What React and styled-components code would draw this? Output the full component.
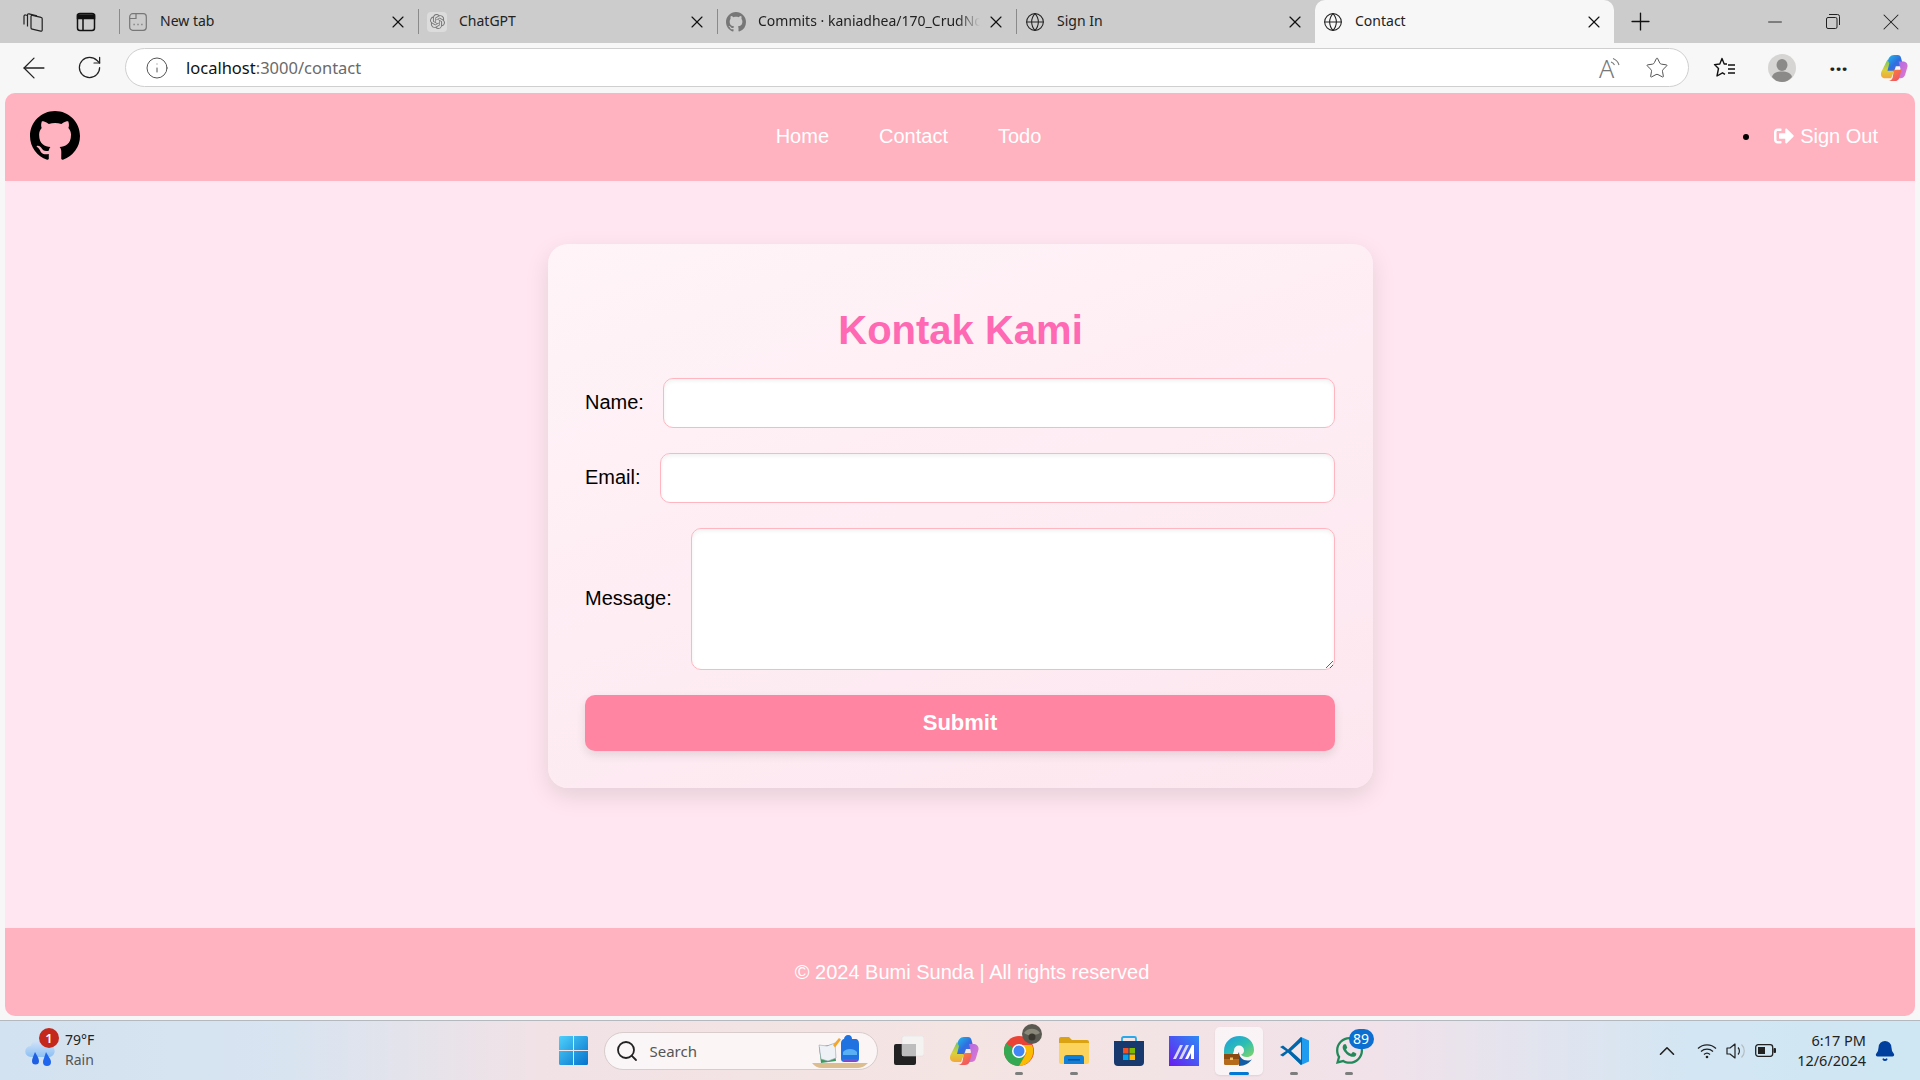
import styled, { createGlobalStyle } from "styled-components";
import { FaSignOutAlt, FaWhatsapp } from "react-icons/fa";
import { BsGithub } from "react-icons/bs";
import { SiOpenai } from "react-icons/si";
import { X, Plus, Minus, Globe, ArrowLeft, RotateCw, Info, Star, ChevronUp, Search, Bell } from "lucide-react";

const GlobalStyle = createGlobalStyle`
    html, body {
        margin: 0;
        padding: 0;
        width: 1920px;
        height: 1080px;
        overflow: hidden;
        background: #f7f7f7;
    }
    * {
        box-sizing: border-box;
    }
`;

function NewTabIcon() {
    return (
        <svg width="18" height="18" viewBox="0 0 18 18" fill="none" stroke="#777" strokeWidth="1.2">
            <rect x=".7" y=".7" width="16.600" height="16.600" rx="3" />
            <path d="M.7 5.500h6.300V.7" />
            <path d="M4.500 11.500h1.200M8.400 11.500h1.200M12.300 11.500h1.200" strokeWidth="1.6" />
        </svg>
    );
}

function WorkspacesIcon() {
    return (
        <svg width="22" height="22" viewBox="0 0 22 22" fill="none" stroke="#222" strokeWidth="1.2">
            <path d="M9 5.500a1.200 1.200 0 0 1 1.500-1.200l8.500 2a1.500 1.500 0 0 1 1.200 1.500V19a1.200 1.200 0 0 1-1.500 1.200l-8.500-2A1.500 1.500 0 0 1 9 16.700Z" />
            <path d="M5.500 15.500V4a1.200 1.200 0 0 1 1.500-1.200l8 2" />
            <path d="M2 13.500V5.200A1.200 1.200 0 0 1 3.500 4L5.500 4.500" />
        </svg>
    );
}

function TabsIcon() {
    return (
        <svg width="20" height="20" viewBox="0 0 20 20" fill="none" stroke="#111" strokeWidth="1.5">
            <rect x="1.500" y="1.500" width="17" height="17" rx="2.500" />
            <path d="M1.500 3h17v3.500h-17z" fill="#111" />
            <path d="M7 6.500v12" />
        </svg>
    );
}

function RestoreIcon() {
    return (
        <svg width="14" height="15" viewBox="0 0 14 15" fill="none" stroke="#222" strokeWidth="1">
            <rect x=".5" y="3.500" width="10.500" height="11" rx="1.500" />
            <path d="M3 .5h8.500a2 2 0 0 1 2 2V11" />
        </svg>
    );
}

function ReadAloudIcon() {
    return (
        <svg width="22" height="24" viewBox="0 0 22 24" fill="none" stroke="#777" strokeWidth="1.1" overflow="visible">
            <text x="0" y="22" fontFamily="Noto Sans, sans-serif" fontSize="25" fontWeight="300" fill="#777" stroke="none">A</text>
            <path d="M12 6a6 6 0 0 1 3.500 3M14 2.500a10 10 0 0 1 6 6.500" />
        </svg>
    );
}

function FavoritesIcon() {
    return (
        <svg width="24" height="24" viewBox="0 0 24 24" fill="none" stroke="#111" strokeWidth="1.4">
            <path d="M14 8h-2.800L9 2.500 6.800 8 1.500 8.600 5.500 12.500 4 20l5.500-3.200 2.500 1.500" strokeLinejoin="round" />
            <path d="M15 9h7M15 13h7M15 17h7" />
        </svg>
    );
}

function ProfileIcon() {
    return (
        <svg width="28" height="28" viewBox="0 0 28 28">
            <circle cx="14" cy="14" r="14" fill="#d6d5d3" />
            <ellipse cx="14" cy="11" rx="5.500" ry="6" fill="#8b8a88" />
            <path d="M4 23c1-4 5-5.500 10-5.500s9 1.500 10 5.500c-2.500 3-6 5-10 5s-7.500-2-10-5Z" fill="#8b8a88" />
        </svg>
    );
}

function CopilotIcon({ id, size = 30 }) {
    return (
        <svg width={size} height={size} viewBox="0 0 30 30">
            <defs>
                <linearGradient id={`${id}a`} x1="0" y1="0" x2="1" y2="1">
                    <stop offset="0" stopColor="#1fc0e8" />
                    <stop offset="0.5" stopColor="#2f6fe0" />
                    <stop offset="1" stopColor="#6b5be0" />
                </linearGradient>
                <linearGradient id={`${id}b`} x1="0" y1="0" x2="0" y2="1">
                    <stop offset="0" stopColor="#6cc46a" />
                    <stop offset="0.55" stopColor="#d8d23a" />
                    <stop offset="1" stopColor="#f5a63a" />
                </linearGradient>
                <linearGradient id={`${id}c`} x1="0" y1="0" x2="1" y2="1">
                    <stop offset="0" stopColor="#a86ae8" />
                    <stop offset="1" stopColor="#e87ac8" />
                </linearGradient>
                <linearGradient id={`${id}d`} x1="0" y1="0" x2="1" y2="1">
                    <stop offset="0" stopColor="#f78a3a" />
                    <stop offset="1" stopColor="#f04a6a" />
                </linearGradient>
            </defs>
            <path d="M8 9c1-5 3-8 7-8h4c2 0 3 1 3.500 3L25 13h-8l-2 6H7Z" fill={`url(#${id}a)`} />
            <path d="M8 6 1.500 19c-1.500 4 .5 7 4 7H12l3-8H8l2-8Z" fill={`url(#${id}b)`} />
            <path d="M20 8h4c3.500 0 6 2 5.500 5.500L27 22c-.5 2.500-2.500 4-5 4h-4l4-10Z" fill={`url(#${id}c)`} />
            <path d="M15 17h8l-2.500 9c-.5 2-2.500 3-4.500 3H9c2 0 4-1.500 4.500-3.500Z" fill={`url(#${id}d)`} />
        </svg>
    );
}

function WeatherIcon() {
    return (
        <svg width="32" height="30" viewBox="0 0 32 30">
            <defs>
                <linearGradient id="cloud" x1="0" y1="0" x2="0" y2="1">
                    <stop offset="0" stopColor="#d5e4f8" />
                    <stop offset="1" stopColor="#8cc0f4" />
                </linearGradient>
            </defs>
            <path d="M6 19a5.500 5.500 0 0 1-.5-11A9 9 0 0 1 22 7a6 6 0 0 1 3 12Z" fill="url(#cloud)" />
            <path d="M10 14c1.500 3 4 6 4 9a3.500 3.500 0 0 1-7 0c0-2 1.500-5 3-9Z" fill="#1f5fe6" />
            <path d="M21 14c2 4 5 7 5 10a4 4 0 0 1-8 0c0-2 1.500-5 3-10Z" fill="#1f66ee" />
        </svg>
    );
}

function StartIcon() {
    return (
        <svg width="29" height="29" viewBox="0 0 29 29">
            <defs>
                <linearGradient id="win" x1="0" y1="0" x2="1" y2="1">
                    <stop offset="0" stopColor="#4fd0fb" />
                    <stop offset="1" stopColor="#0472cc" />
                </linearGradient>
            </defs>
            <path d="M0 1.500A1.500 1.500 0 0 1 1.500 0H14v14H0ZM15 0h12.500A1.500 1.500 0 0 1 29 1.500V14H15ZM0 15h14v14H1.500A1.500 1.500 0 0 1 0 27.500ZM15 15h14v12.500a1.500 1.500 0 0 1-1.500 1.500H15Z" fill="url(#win)" />
        </svg>
    );
}

function SearchArt() {
    return (
        <svg width="58" height="36" viewBox="0 0 58 36">
            <path d="M0 30h56c-3 3-6 5-12 5H10C6 35 2 33 0 30Z" fill="#dcbd8f" />
            <path d="M7 14l15-3 2 17-15 2Z" fill="#3d9a5c" />
            <path d="M7 12l8 1 8-3 1 15-8 3-7-2Z" fill="#eef2f6" stroke="#9aa5b5" strokeWidth=".6" />
            <path d="M21 12l6-7 2 1.500-6 8Z" fill="#f4a62a" />
            <path d="M36 2c3 0 4 2 4 4h3c3 0 4 2 4 5v14c0 3-1 4-4 4H33c-3 0-4-1-4-4V11c0-3 1-5 4-5h-1c0-2 2-4 4-4Z" fill="#1f72e0" />
            <path d="M31 19c3-4 11-4 14 0v3H31Z" fill="#5ab0f5" />
            <path d="M31 26h14v2H31Z" fill="#7a4fd0" />
        </svg>
    );
}

function TaskViewIcon() {
    return (
        <svg width="30" height="29" viewBox="0 0 30 29">
            <rect x="0" y="8" width="22" height="21" rx="2" fill="#222" />
            <rect x="8" y="0" width="22" height="20" rx="2" fill="#f4f4f4" fillOpacity=".85" stroke="#ddd" strokeWidth=".5" />
            <rect x="8" y="8" width="14" height="12" fill="#bdbdbd" />
        </svg>
    );
}

function ChromeIcon() {
    return (
        <svg width="30" height="30" viewBox="0 0 30 30">
            <circle cx="15" cy="15" r="15" fill="#ea4335" />
            <path d="M15 15 2 7.500A15 15 0 0 0 15 30l7.500-13Z" fill="#34a853" />
            <path d="M15 9h13a15 15 0 0 1-13 21l7.500-13Z" fill="#fbbc04" />
            <circle cx="15" cy="15" r="7" fill="#fff" />
            <circle cx="15" cy="15" r="5.500" fill="#4285f4" />
        </svg>
    );
}

function AvatarIcon() {
    return (
        <svg width="20" height="20" viewBox="0 0 20 20">
            <circle cx="10" cy="10" r="10" fill="#5b5a52" />
            <path d="M2 9c3-5 12-6 16 0-3 2-4 1-7 2s-6 0-9-2Z" fill="#8a8878" />
            <circle cx="10" cy="13" r="3.500" fill="#3a3730" />
        </svg>
    );
}

function FolderIcon() {
    return (
        <svg width="30" height="27" viewBox="0 0 30 27">
            <path d="M0 2a2 2 0 0 1 2-2h8l3 3h15a2 2 0 0 1 2 2v4H0Z" fill="#dba213" />
            <path d="M0 6h30v19a2 2 0 0 1-2 2H2a2 2 0 0 1-2-2Z" fill="#fcd35d" />
            <path d="M5 27v-6a3 3 0 0 1 3-3h14a3 3 0 0 1 3 3v6Z" fill="#0f7fd8" />
            <path d="M9 22h12v1.500H9Z" fill="#0b4f96" />
        </svg>
    );
}

function StoreIcon() {
    return (
        <svg width="30" height="30" viewBox="0 0 30 30">
            <path d="M8 5V2.500A1.500 1.500 0 0 1 9.500 1h11A1.500 1.500 0 0 1 22 2.500V5" fill="none" stroke="#29a8ea" strokeWidth="1.8" />
            <path d="M0 5h30v21a4 4 0 0 1-4 4H4a4 4 0 0 1-4-4Z" fill="#17396d" />
            <rect x="9" y="12" width="5.500" height="5.500" fill="#f25022" />
            <rect x="15.500" y="12" width="5.500" height="5.500" fill="#7fba00" />
            <rect x="9" y="18.500" width="5.500" height="5.500" fill="#00a4ef" />
            <rect x="15.500" y="18.500" width="5.500" height="5.500" fill="#ffb900" />
        </svg>
    );
}

function MicaIcon() {
    return (
        <svg width="30" height="30" viewBox="0 0 30 30">
            <defs>
                <linearGradient id="mica" x1="1" y1="0" x2="0" y2="1">
                    <stop offset="0" stopColor="#2b8bf5" />
                    <stop offset="1" stopColor="#6a1cf0" />
                </linearGradient>
            </defs>
            <rect width="30" height="30" fill="url(#mica)" />
            <path d="M4 23 11 9h3L7 23ZM10 23l7-14h3l-7 14Z" fill="#d8d8f8" />
            <path d="M16 23l7-14h2v14h-3v-6l-3 6Z" fill="#fff" />
        </svg>
    );
}

function EdgeIcon() {
    return (
        <svg width="30" height="30" viewBox="0 0 30 30">
            <defs>
                <linearGradient id="edge" x1="0" y1="0" x2="1" y2="1">
                    <stop offset="0" stopColor="#1b9de2" />
                    <stop offset="0.55" stopColor="#2fbfb0" />
                    <stop offset="1" stopColor="#86d562" />
                </linearGradient>
            </defs>
            <path d="M0 15C0 6 7 0 15.500 0 24 0 30 6 30 14c0 4.500-3 7-7.500 7-2.500 0-4.500-1-5.500-2.500 2-.5 3-2 3-4a5 5 0 0 0-10 0L9 18H0Z" fill="url(#edge)" />
            <path d="M15 16c0 5 4 8.500 8.500 8.500 2 0 3.500-.5 4.500-1.500-2.500 4-7 7-13 7l-1-12Z" fill="#115ca5" />
            <rect x="0" y="18" width="15" height="11" rx="1.500" fill="#b66a1c" />
            <rect x="0" y="18" width="15" height="5" fill="#8a4a12" />
            <rect x="6" y="21.500" width="3" height="2.500" fill="#f3c065" />
        </svg>
    );
}

function VsCodeIcon() {
    return (
        <svg width="30" height="30" viewBox="0 0 30 30">
            <path d="M22 1 30 4.500v21L22 29 9 16.500Z" fill="#1f9cf0" />
            <path d="M22 1 9 13.500 4 9.500 1 11l6 4-6 4 3 1.500 5-4L22 29l1-1V2Z" fill="#0065a9" />
            <path d="M22 6v18l-10-9Z" fill="#f1e6ea" />
        </svg>
    );
}

function SpeakerIcon() {
    return (
        <svg width="20" height="18" viewBox="0 0 20 18" fill="none" stroke="#222" strokeWidth="1.2">
            <path d="M1 6h3l5-4v14l-5-4H1Z" strokeLinejoin="round" />
            <path d="M12 5.500a5 5 0 0 1 0 7" />
            <path d="M15.500 2.500a9 9 0 0 1 0 13" stroke="#b5bcc2" />
        </svg>
    );
}

function WifiIcon() {
    return (
        <svg width="20" height="16" viewBox="0 0 20 16" fill="none" stroke="#222" strokeWidth="1.3">
            <path d="M1 5.500a13 13 0 0 1 18 0M4 8.500a9 9 0 0 1 12 0M7 11.500a4.500 4.500 0 0 1 6 0" />
            <circle cx="10" cy="14" r="1.3" fill="#222" stroke="none" />
        </svg>
    );
}

function BatteryIcon() {
    return (
        <svg width="21" height="13" viewBox="0 0 21 13">
            <rect x=".7" y=".7" width="17" height="11.600" rx="2.500" fill="none" stroke="#222" strokeWidth="1.3" />
            <rect x="3" y="3" width="7" height="7" fill="#222" />
            <rect x="18.500" y="4" width="2.500" height="5" rx="1" fill="#222" />
        </svg>
    );
}

export default function App() {
    const tabs = [
        { title: "New tab", icon: <NewTabIcon /> },
        { title: "ChatGPT", icon: <GptIcon><SiOpenai size={15} /></GptIcon> },
        { title: "Commits · kaniadhea/170_CrudNode", icon: <BsGithub size={20} color="#777" />, fade: true },
        { title: "Sign In", icon: <Globe size={24} strokeWidth={1.3} color="#222" /> },
        { title: "Contact", icon: <Globe size={24} strokeWidth={1.3} color="#222" />, active: true },
    ];

    return (
        <Screen>
            <GlobalStyle />

            <TabStrip>
                <StripButton><WorkspacesIcon /></StripButton>
                <StripButton><TabsIcon /></StripButton>
                <TabList>
                    {tabs.map((tab) => (
                        <Tab key={tab.title} $active={tab.active}>
                            <TabIcon>{tab.icon}</TabIcon>
                            <TabTitle $fade={tab.fade}>{tab.title}</TabTitle>
                            <X size={20} strokeWidth={1.4} color="#111" />
                        </Tab>
                    ))}
                </TabList>
                <NewTabButton><Plus size={29} strokeWidth={1.1} color="#111" /></NewTabButton>
                <WindowControls>
                    <WindowButton><Minus size={22} strokeWidth={1} color="#222" /></WindowButton>
                    <WindowButton><RestoreIcon /></WindowButton>
                    <WindowButton><X size={28} strokeWidth={0.9} color="#222" /></WindowButton>
                </WindowControls>
            </TabStrip>

            <Toolbar>
                <ToolButton><ArrowLeft size={34} strokeWidth={0.9} color="#222" /></ToolButton>
                <ToolButton><RotateCw size={27} strokeWidth={1.1} color="#222" /></ToolButton>
                <AddressBar>
                    <Info size={24} strokeWidth={1} color="#555" />
                    <Url>localhost<UrlPath>:3000/contact</UrlPath></Url>
                    <AddressIcons>
                        <ReadAloudIcon />
                        <Star size={24} strokeWidth={1} color="#555" />
                    </AddressIcons>
                </AddressBar>
                <ToolIcons>
                    <ToolIcon><FavoritesIcon /></ToolIcon>
                    <ToolIcon><ProfileIcon /></ToolIcon>
                    <ToolIcon><Dots>···</Dots></ToolIcon>
                    <ToolIcon><CopilotIcon id="edgecop" size={28} /></ToolIcon>
                </ToolIcons>
            </Toolbar>

            <Page>
                <Navbar>
                    <BsGithub size={50} color="#000" />
                    <NavLinks>
                        <NavLink>Home</NavLink>
                        <NavLink>Contact</NavLink>
                        <NavLink>Todo</NavLink>
                    </NavLinks>
                    <NavRight>
                        <Bullet />
                        <NavLink>
                            <FaSignOutAlt size={20} />
                            Sign Out
                        </NavLink>
                    </NavRight>
                </Navbar>

                <Main>
                    <Card>
                        <Title>Kontak Kami</Title>
                        <Field>
                            <Label>Name:</Label>
                            <Input type="text" />
                        </Field>
                        <Field>
                            <Label>Email:</Label>
                            <Input type="email" />
                        </Field>
                        <Field>
                            <Label>Message:</Label>
                            <TextArea />
                        </Field>
                        <SubmitButton type="button">Submit</SubmitButton>
                    </Card>
                </Main>

                <Footer>© 2024 Bumi Sunda | All rights reserved</Footer>
            </Page>

            <Taskbar>
                <Weather>
                    <WeatherArt>
                        <WeatherIcon />
                        <WeatherBadge>1</WeatherBadge>
                    </WeatherArt>
                    <WeatherText>
                        <span>79°F</span>
                        <WeatherSub>Rain</WeatherSub>
                    </WeatherText>
                </Weather>

                <TaskIcons>
                    <TaskItem><StartIcon /></TaskItem>
                    <SearchBox>
                        <Search size={24} strokeWidth={1.8} color="#222" />
                        <SearchText>Search</SearchText>
                        <SearchArt />
                    </SearchBox>
                    <TaskItem><TaskViewIcon /></TaskItem>
                    <TaskItem><CopilotIcon id="taskcop" /></TaskItem>
                    <TaskItem $open>
                        <ChromeIcon />
                        <Avatar><AvatarIcon /></Avatar>
                    </TaskItem>
                    <TaskItem $open><FolderIcon /></TaskItem>
                    <TaskItem><StoreIcon /></TaskItem>
                    <TaskItem><MicaIcon /></TaskItem>
                    <TaskItem $current $open><EdgeIcon /></TaskItem>
                    <TaskItem $open><VsCodeIcon /></TaskItem>
                    <TaskItem $open>
                        <FaWhatsapp size={31} color="#22895a" />
                        <WhatsappBadge>89</WhatsappBadge>
                    </TaskItem>
                </TaskIcons>

                <Tray>
                    <ChevronUp size={26} strokeWidth={1.5} color="#222" />
                    <TrayIcons>
                        <WifiIcon />
                        <SpeakerIcon />
                        <BatteryIcon />
                    </TrayIcons>
                    <Clock>
                        <span>6:17 PM</span>
                        <span>12/6/2024</span>
                    </Clock>
                    <Bell size={22} fill="#003f9e" color="#003f9e" />
                </Tray>
            </Taskbar>
        </Screen>
    );
}

const Screen = styled.div`
    width: 1920px;
    height: 1080px;
    display: flex;
    flex-direction: column;
    background-color: #f7f7f7;
    font-family: "Liberation Sans", Arial, sans-serif;
`;

const TabStrip = styled.div`
    height: 43px;
    flex-shrink: 0;
    display: flex;
    align-items: center;
    background-color: #cccccc;
    font-family: "Noto Sans", sans-serif;
    padding-left: 6px;
`;

const StripButton = styled.div`
    width: 53px;
    display: flex;
    justify-content: center;
`;

const TabList = styled.div`
    display: flex;
    align-items: center;
    height: 43px;
    margin-left: 7px;
`;

const Tab = styled.div`
    width: 299px;
    display: flex;
    align-items: center;
    align-self: ${(p) => (p.$active ? "stretch" : "center")};
    height: ${(p) => (p.$active ? "43px" : "25px")};
    padding: 0 10px 0 8px;
    border-left: ${(p) => (p.$active ? "0" : "1px solid #8a8a8a")};
    background-color: ${(p) => (p.$active ? "#f7f7f7" : "transparent")};
    border-radius: ${(p) => (p.$active ? "10px 10px 0 0" : "0")};
`;

const TabIcon = styled.div`
    width: 20px;
    display: flex;
    justify-content: center;
    flex-shrink: 0;
`;

const GptIcon = styled.div`
    width: 20px;
    height: 20px;
    border-radius: 4px;
    background-color: #dcdcdc;
    color: #777;
    display: flex;
    align-items: center;
    justify-content: center;
`;

const TabTitle = styled.span`
    flex: 1;
    margin-left: 12px;
    margin-right: 6px;
    padding-bottom: 2px;
    font-size: 14px;
    color: #222;
    white-space: nowrap;
    overflow: hidden;
    mask-image: ${(p) => (p.$fade ? "linear-gradient(to right, #000 90%, transparent 100%)" : "none")};
`;

const NewTabButton = styled.div`
    width: 52px;
    display: flex;
    justify-content: center;
`;

const WindowControls = styled.div`
    margin-left: auto;
    display: flex;
`;

const WindowButton = styled.div`
    width: 58px;
    height: 43px;
    display: flex;
    align-items: center;
    justify-content: center;
`;

const Toolbar = styled.div`
    height: 50px;
    flex-shrink: 0;
    display: flex;
    align-items: center;
    background-color: #f7f7f7;
    padding: 0 0 1px 6px;
    font-family: "Noto Sans", sans-serif;
`;

const ToolButton = styled.div`
    width: 56px;
    display: flex;
    justify-content: center;
`;

const AddressBar = styled.div`
    width: 1564px;
    height: 39px;
    flex-shrink: 0;
    margin-left: 8px;
    padding: 0 19px 0 19px;
    display: flex;
    align-items: center;
    background-color: #ffffff;
    border: 1px solid #cfcfcf;
    border-radius: 20px;
`;

const Url = styled.span`
    margin-left: 17px;
    padding-bottom: 1px;
    font-size: 16.5px;
    color: #111;
`;

const UrlPath = styled.span`
    color: #6a6a6a;
`;

const AddressIcons = styled.div`
    margin-left: auto;
    display: flex;
    align-items: center;
    gap: 24px;
`;

const ToolIcons = styled.div`
    display: flex;
    flex-shrink: 0;
    margin-left: 7px;
`;

const ToolIcon = styled.div`
    width: 57px;
    display: flex;
    justify-content: center;
    align-items: center;

    &:last-child {
        width: 53px;
    }
`;

const Dots = styled.span`
    font-size: 22px;
    font-weight: 700;
    line-height: 1;
    color: #222;
`;

const Page = styled.div`
    flex: 1;
    margin: 0 5px 4px;
    display: flex;
    flex-direction: column;
    background-color: #ffe6f0;
    border-radius: 10px;
    overflow: hidden;
`;

const Navbar = styled.nav`
    height: 88px;
    flex-shrink: 0;
    display: flex;
    align-items: center;
    justify-content: space-between;
    padding: 0 37px 2px 25px;
    background-color: #ffb3c0;
`;

const NavLinks = styled.div`
    display: flex;
    gap: 50px;
`;

const NavLink = styled.a`
    display: flex;
    align-items: center;
    gap: 6px;
    font-size: 20px;
    color: #ffffff;
`;

const NavRight = styled.div`
    width: 141px;
    display: flex;
    align-items: center;
    justify-content: space-between;
    padding-left: 6px;
`;

const Bullet = styled.span`
    width: 6px;
    height: 6px;
    margin-top: 2px;
    border-radius: 50%;
    background-color: #000;
`;

const Main = styled.main`
    flex: 1;
    padding: 63px 0 0 1px;
`;

const Card = styled.form`
    width: 825px;
    margin: 0 auto;
    padding: 37px 38px 37px 37px;
    background: linear-gradient(160deg, #fff4f8 0%, #fde6ef 100%);
    border-radius: 20px;
    box-shadow: 0 8px 24px rgba(0, 0, 0, 0.1);
`;

const Title = styled.h2`
    margin: 27px 0 25px;
    padding-left: 1px;
    font-size: 40px;
    font-weight: 700;
    text-align: center;
    color: #ff69b4;
`;

const Field = styled.div`
    display: flex;
    align-items: center;
    gap: 19px;
    margin-bottom: 25px;
`;

const Label = styled.label`
    padding-bottom: 2px;
    font-size: 20px;
    color: #000;
`;

const Input = styled.input`
    flex: 1;
    height: 50px;
    background-color: #fff;
    border: 1.5px solid #ffb6c1;
    border-radius: 10px;
    box-shadow: inset 0 2px 4px rgba(0, 0, 0, 0.06);
`;

const TextArea = styled.textarea`
    flex: 1;
    height: 142px;
    background-color: #fff;
    border: 1.5px solid #ffb6c1;
    border-radius: 10px;
    box-shadow: inset 0 2px 4px rgba(0, 0, 0, 0.06);
`;

const SubmitButton = styled.button`
    display: block;
    width: 100%;
    height: 56px;
    border: none;
    border-radius: 10px;
    background-color: #ff85a2;
    color: #fff;
    font-family: "Liberation Sans", Arial, sans-serif;
    font-size: 22px;
    font-weight: 700;
    box-shadow: 0 4px 10px rgba(0, 0, 0, 0.1);
`;

const Footer = styled.footer`
    height: 88px;
    flex-shrink: 0;
    display: flex;
    align-items: center;
    justify-content: center;
    padding-left: 24px;
    background-color: #ffb3c0;
    color: #fff;
    font-size: 20px;
`;

const Taskbar = styled.div`
    height: 60px;
    flex-shrink: 0;
    display: grid;
    grid-template-columns: 1fr auto 1fr;
    padding-left: 2px;
    border-top: 1px solid #b4b9bf;
    background: linear-gradient(90deg, #d3e2f0 0%, #d8e4f0 15%, #f1e2e6 28%, #f4e4e2 50%, #f1e2ea 72%, #d3e6f3 88%, #cfe6f3 100%);
    font-family: "Noto Sans", sans-serif;
    color: #222;
`;

const Weather = styled.div`
    display: flex;
    align-items: center;
    padding-left: 23px;
    gap: 8px;
`;

const WeatherArt = styled.div`
    position: relative;
    width: 32px;
    height: 30px;
    display: flex;
    margin-top: 4px;
`;

const WeatherBadge = styled.span`
    position: absolute;
    top: -10px;
    left: 14px;
    width: 20px;
    height: 20px;
    border-radius: 50%;
    background-color: #c4281c;
    color: #fff;
    font-size: 13px;
    font-weight: 600;
    display: flex;
    align-items: center;
    justify-content: center;
`;

const WeatherText = styled.div`
    display: flex;
    flex-direction: column;
    margin-bottom: 2px;
    font-size: 14px;
    line-height: 20px;
`;

const WeatherSub = styled.span`
    color: #555;
`;

const TaskIcons = styled.div`
    display: flex;
    align-items: center;
`;

const TaskItem = styled.div`
    position: relative;
    width: ${(p) => (p.$current ? "48px" : "55px")};
    height: 48px;
    margin: ${(p) => (p.$current ? "0 3.5px" : "0")};
    display: flex;
    align-items: center;
    justify-content: center;
    border-radius: 5px;
    background-color: ${(p) => (p.$current ? "rgba(255, 255, 255, 0.6)" : "transparent")};
    box-shadow: ${(p) => (p.$current ? "0 1px 2px rgba(0, 0, 0, 0.08)" : "none")};

    &::after {
        content: "";
        display: ${(p) => (p.$open ? "block" : "none")};
        position: absolute;
        bottom: 0;
        left: 50%;
        width: ${(p) => (p.$current ? "20px" : "8px")};
        height: 3px;
        transform: translateX(-50%);
        border-radius: 2px;
        background-color: ${(p) => (p.$current ? "#0078d4" : "#7d7d7d")};
    }
`;

const Avatar = styled.div`
    position: absolute;
    top: -3px;
    right: 5px;
    display: flex;
`;

const WhatsappBadge = styled.span`
    position: absolute;
    top: 2px;
    right: 3px;
    width: 25px;
    height: 20px;
    border-radius: 10px;
    background-color: #0a6fd0;
    color: #fff;
    font-size: 14px;
    display: flex;
    align-items: center;
    justify-content: center;
`;

const SearchBox = styled.div`
    width: 274px;
    height: 38px;
    margin: 0 4px 0 3px;
    padding: 0 7px 0 10px;
    display: flex;
    align-items: center;
    background-color: rgba(255, 255, 255, 0.65);
    border: 1px solid #d8cccc;
    border-radius: 19px;
`;

const SearchText = styled.span`
    flex: 1;
    margin-left: 11px;
    font-size: 15px;
    color: #555;
`;

const Tray = styled.div`
    display: flex;
    align-items: center;
    justify-content: flex-end;
    padding-right: 24px;
`;

const TrayIcons = styled.div`
    display: flex;
    align-items: center;
    gap: 9px;
    margin: 0 21px 0 17px;
`;

const Clock = styled.div`
    display: flex;
    flex-direction: column;
    align-items: flex-end;
    margin: 0 8px 2px 0;
    font-size: 14.5px;
    line-height: 20px;
`;
